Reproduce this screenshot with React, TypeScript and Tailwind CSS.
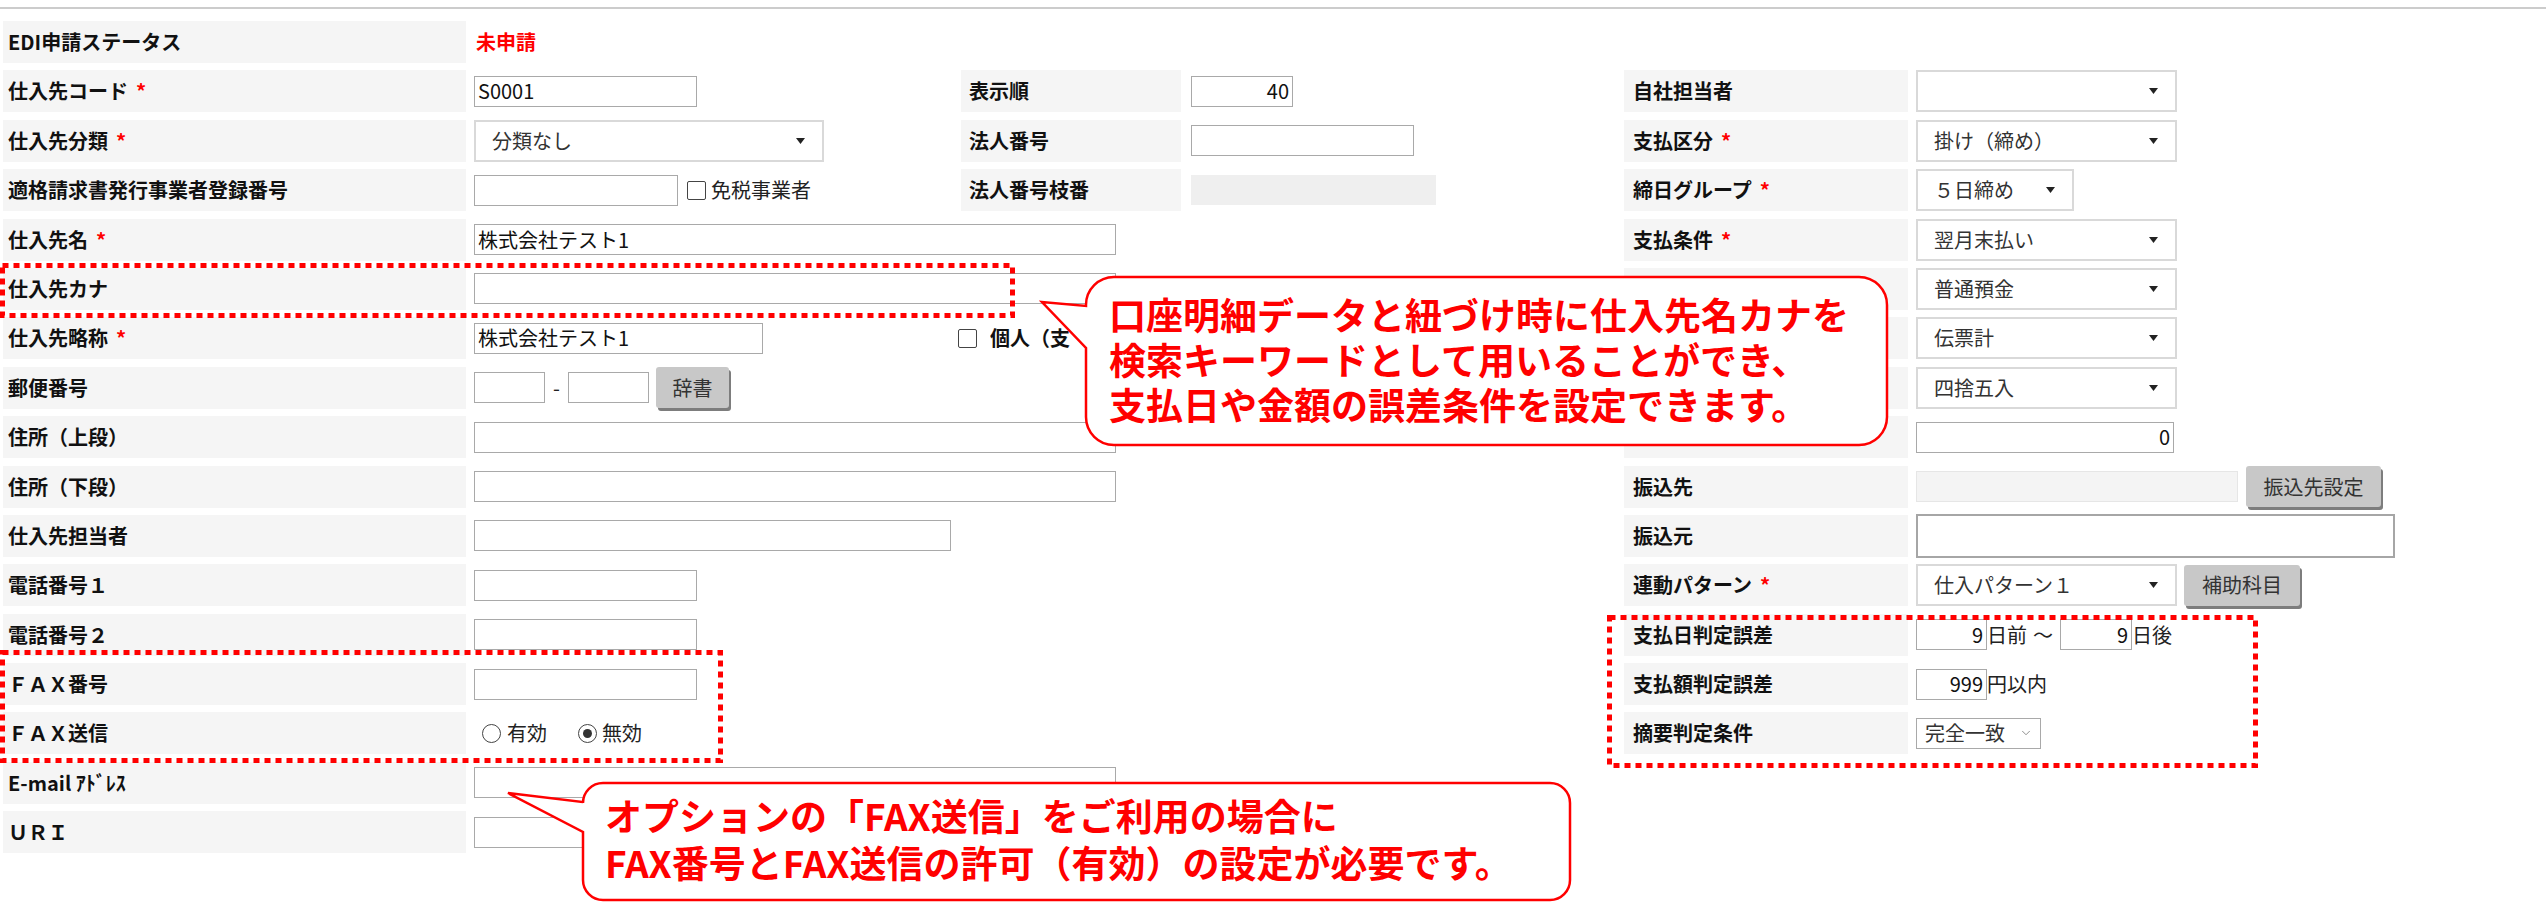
import React from 'react';
import { ChevronDown } from 'lucide-react';

type Lbl = { t: string; req?: boolean };
type Row = {
  l1: Lbl;
  v1?: React.ReactNode;
  l2?: Lbl;
  m2?: React.ReactNode;
  v2?: React.ReactNode;
  l3?: Lbl;
  v3?: React.ReactNode;
};

const Tri = () => (
  <svg width="9" height="6" viewBox="0 0 9 6" className="shrink-0">
    <path d="M0 0h9L4.5 6z" fill="#222" />
  </svg>
);

const Inp = ({ cls, v, right }: { cls: string; v?: string; right?: boolean }) => (
  <div
    className={`${cls} h-[31px] shrink-0 border border-[#a9a9a9] bg-white flex items-center px-[3px] text-[20px] text-[#111] whitespace-nowrap ${
      right ? 'justify-end' : ''
    }`}
  >
    {v}
  </div>
);

const Sel = ({ cls, v }: { cls: string; v?: string }) => (
  <div
    className={`${cls} h-[42px] shrink-0 border-2 border-[#d9d9d9] bg-white flex items-center justify-between pl-[16px] pr-[17px] text-[20px] text-[#333] whitespace-nowrap`}
  >
    <span>{v}</span>
    <Tri />
  </div>
);

const Btn = ({ cls, t }: { cls: string; t: string }) => (
  <div
    className={`${cls} h-[41px] shrink-0 bg-[#c8c8c8] rounded-[3px] shadow-[2px_3px_0_#7d7d7d] flex items-center justify-center text-[20px] text-[#333] whitespace-nowrap`}
  >
    {t}
  </div>
);

const Check = () => (
  <span className="block w-[19px] h-[19px] shrink-0 border-[1.5px] border-[#444] bg-white rounded-[2px]" />
);

const Radio = ({ on }: { on?: boolean }) => (
  <span className="w-[19px] h-[19px] shrink-0 rounded-full border-[1.5px] border-[#444] bg-white flex items-center justify-center">
    {on && <span className="w-[9px] h-[9px] rounded-full bg-[#333]" />}
  </span>
);

// labels on the right column under the callout are not visible, cells stay empty
const rows: Row[] = [
  { l1: { t: 'EDI申請ステータス' }, v1: <span className="pl-[2px] font-bold text-[#ff0000]">未申請</span> },
  {
    l1: { t: '仕入先コード', req: true },
    v1: <Inp cls="w-[223px]" v="S0001" />,
    l2: { t: '表示順' },
    v2: <Inp cls="w-[102px]" v="40" right />,
    l3: { t: '自社担当者' },
    v3: <Sel cls="w-[261px]" v="" />,
  },
  {
    l1: { t: '仕入先分類', req: true },
    v1: <Sel cls="w-[350px]" v="分類なし" />,
    l2: { t: '法人番号' },
    v2: <Inp cls="w-[223px]" />,
    l3: { t: '支払区分', req: true },
    v3: <Sel cls="w-[261px]" v="掛け（締め）" />,
  },
  {
    l1: { t: '適格請求書発行事業者登録番号' },
    v1: (
      <>
        <Inp cls="w-[204px]" />
        <span className="ml-[9px]">
          <Check />
        </span>
        <span className="ml-[5px] text-[#222]">免税事業者</span>
      </>
    ),
    l2: { t: '法人番号枝番' },
    v2: <div className="w-[245px] h-[30px] bg-[#efefef]" />,
    l3: { t: '締日グループ', req: true },
    v3: <Sel cls="w-[158px]" v="５日締め" />,
  },
  {
    l1: { t: '仕入先名', req: true },
    v1: <Inp cls="w-[642px]" v="株式会社テスト1" />,
    l3: { t: '支払条件', req: true },
    v3: <Sel cls="w-[261px]" v="翌月末払い" />,
  },
  {
    l1: { t: '仕入先カナ' },
    v1: <Inp cls="w-[642px]" />,
    l3: { t: '' },
    v3: <Sel cls="w-[261px]" v="普通預金" />,
  },
  {
    l1: { t: '仕入先略称', req: true },
    v1: <Inp cls="w-[289px]" v="株式会社テスト1" />,
    m2: (
      <>
        <Check />
        <span className="ml-[13px] w-[80px] overflow-hidden font-bold text-[#111]">個人（支払</span>
      </>
    ),
    l3: { t: '' },
    v3: <Sel cls="w-[261px]" v="伝票計" />,
  },
  {
    l1: { t: '郵便番号' },
    v1: (
      <>
        <Inp cls="w-[71px]" />
        <span className="mx-[8px] text-[#222]">-</span>
        <Inp cls="w-[81px]" />
        <Btn cls="ml-[7px] w-[73px]" t="辞書" />
      </>
    ),
    l3: { t: '' },
    v3: <Sel cls="w-[261px]" v="四捨五入" />,
  },
  {
    l1: { t: '住所（上段）' },
    v1: <Inp cls="w-[642px]" />,
    l3: { t: '' },
    v3: <Inp cls="w-[258px]" v="0" right />,
  },
  {
    l1: { t: '住所（下段）' },
    v1: <Inp cls="w-[642px]" />,
    l3: { t: '振込先' },
    v3: (
      <>
        <div className="w-[322px] h-[31px] bg-[#f4f4f4] border border-[#e6e6e6]" />
        <Btn cls="ml-[8px] w-[135px]" t="振込先設定" />
      </>
    ),
  },
  {
    l1: { t: '仕入先担当者' },
    v1: <Inp cls="w-[477px]" />,
    l3: { t: '振込元' },
    v3: <div className="w-[479px] h-[44px] border-2 border-[#a6a6a6] bg-white" />,
  },
  {
    l1: { t: '電話番号１' },
    v1: <Inp cls="w-[223px]" />,
    l3: { t: '連動パターン', req: true },
    v3: (
      <>
        <Sel cls="w-[261px]" v="仕入パターン１" />
        <Btn cls="ml-[7px] w-[116px]" t="補助科目" />
      </>
    ),
  },
  {
    l1: { t: '電話番号２' },
    v1: <Inp cls="w-[223px]" />,
    l3: { t: '支払日判定誤差' },
    v3: (
      <>
        <Inp cls="w-[71px]" v="9" right />
        <span className="text-[#222]">日前</span>
        <span className="ml-[6px] mr-[7px] text-[#222]">～</span>
        <Inp cls="w-[72px]" v="9" right />
        <span className="text-[#222]">日後</span>
      </>
    ),
  },
  {
    l1: { t: 'ＦＡＸ番号' },
    v1: <Inp cls="w-[223px]" />,
    l3: { t: '支払額判定誤差' },
    v3: (
      <>
        <Inp cls="w-[71px]" v="999" right />
        <span className="text-[#222]">円以内</span>
      </>
    ),
  },
  {
    l1: { t: 'ＦＡＸ送信' },
    v1: (
      <div className="ml-[8px] flex items-center text-[#222]">
        <Radio />
        <span className="ml-[6px]">有効</span>
        <span className="ml-[31px]">
          <Radio on />
        </span>
        <span className="ml-[5px]">無効</span>
      </div>
    ),
    l3: { t: '摘要判定条件' },
    v3: (
      <div className="w-[125px] h-[31px] border border-[#a9a9a9] bg-white flex items-center justify-between pl-[8px] pr-[7px] text-[20px] text-[#333]">
        <span>完全一致</span>
        <ChevronDown size={14} strokeWidth={1.4} color="#777" />
      </div>
    ),
  },
  { l1: { t: 'E-mail ｱﾄﾞﾚｽ' }, v1: <Inp cls="w-[642px]" /> },
  { l1: { t: 'ＵＲＩ' }, v1: <Inp cls="w-[642px]" /> },
];

const LabelCell = ({ l, pad }: { l?: Lbl; pad: string }) =>
  l ? (
    <div className={`bg-[#f5f5f5] flex items-center ${pad} font-bold text-[20px] text-[#111] whitespace-nowrap`}>
      {l.t}
      {l.req && <span className="ml-[8px] text-[#ff0000]">*</span>}
    </div>
  ) : (
    <div />
  );

const Frame = ({ cls, w, h }: { cls: string; w: number; h: number }) => (
  <svg className={`absolute ${cls}`} width={w} height={h} viewBox={`0 0 ${w} ${h}`}>
    <rect x="2.5" y="2.5" width={w - 5} height={h - 5} fill="none" stroke="#ff0000" strokeWidth="5" strokeDasharray="6 5" />
  </svg>
);

export default function App() {
  return (
    <div className="relative w-[2546px] h-[909px] overflow-hidden bg-white font-['Noto_Sans_CJK_JP','Noto_Sans',sans-serif]">
      <div className="mt-[7px] h-[2px] bg-[#cccccc]" />

      <div className="mt-[12px] pl-[3px] grid grid-cols-[463px_495px_220px_443px_284px_1fr] auto-rows-[42px] gap-y-[7.4px] text-[20px]">
        {rows.map((r, i) => (
          <React.Fragment key={i}>
            <LabelCell l={r.l1} pad="pl-[5px]" />
            <div className="flex items-center pl-[8px] whitespace-nowrap">{r.v1}</div>
            {r.m2 ? (
              <div className="flex items-center -ml-[3px] whitespace-nowrap">{r.m2}</div>
            ) : (
              <LabelCell l={r.l2} pad="pl-[8px]" />
            )}
            <div className="flex items-center pl-[10px] whitespace-nowrap">{r.v2}</div>
            <LabelCell l={r.l3} pad="pl-[9px]" />
            <div className="flex items-center pl-[8px] whitespace-nowrap">{r.v3}</div>
          </React.Fragment>
        ))}
      </div>

      {/* dotted annotation frames */}
      <Frame cls="left-[0px] top-[263px]" w={1015} h={55} />
      <Frame cls="left-[0px] top-[650px]" w={723} h={113} />
      <Frame cls="left-[1607px] top-[615px]" w={651} h={153} />

      {/* callout 1 */}
      <svg className="absolute left-[1036px] top-[272px]" width="856" height="178" viewBox="0 0 856 178">
        <path
          d="M78 5H823A28 28 0 0 1 851 33V145A28 28 0 0 1 823 173H78A28 28 0 0 1 50 145V76L6 30L50 34V33A28 28 0 0 1 78 5Z"
          fill="#ffffff"
          stroke="#ff0000"
          strokeWidth="2.5"
        />
      </svg>
      <div className="absolute left-[1086px] top-[277px] w-[801px] h-[168px] pl-[23px] pt-[15px] text-[37px] leading-[45px] font-bold text-[#ff0000] whitespace-nowrap">
        <div>口座明細データと紐づけ時に仕入先名カナを</div>
        <div>検索キーワードとして用いることができ、</div>
        <div>支払日や金額の誤差条件を設定できます。</div>
      </div>

      {/* callout 2 */}
      <svg className="absolute left-[504px] top-[779px]" width="1070" height="125" viewBox="0 0 1070 125">
        <path
          d="M99 4H1046A20 20 0 0 1 1066 24V101A20 20 0 0 1 1046 121H99A20 20 0 0 1 79 101V53L4 14L79 23V24A20 20 0 0 1 99 4Z"
          fill="#ffffff"
          stroke="#ff0000"
          strokeWidth="2.5"
        />
      </svg>
      <div className="absolute left-[583px] top-[783px] w-[987px] h-[117px] pl-[22px] pt-[9px] text-[37px] leading-[47px] font-bold text-[#ff0000] whitespace-nowrap">
        <div>オプションの「FAX送信」をご利用の場合に</div>
        <div>FAX番号とFAX送信の許可（有効）の設定が必要です。</div>
      </div>
    </div>
  );
}
